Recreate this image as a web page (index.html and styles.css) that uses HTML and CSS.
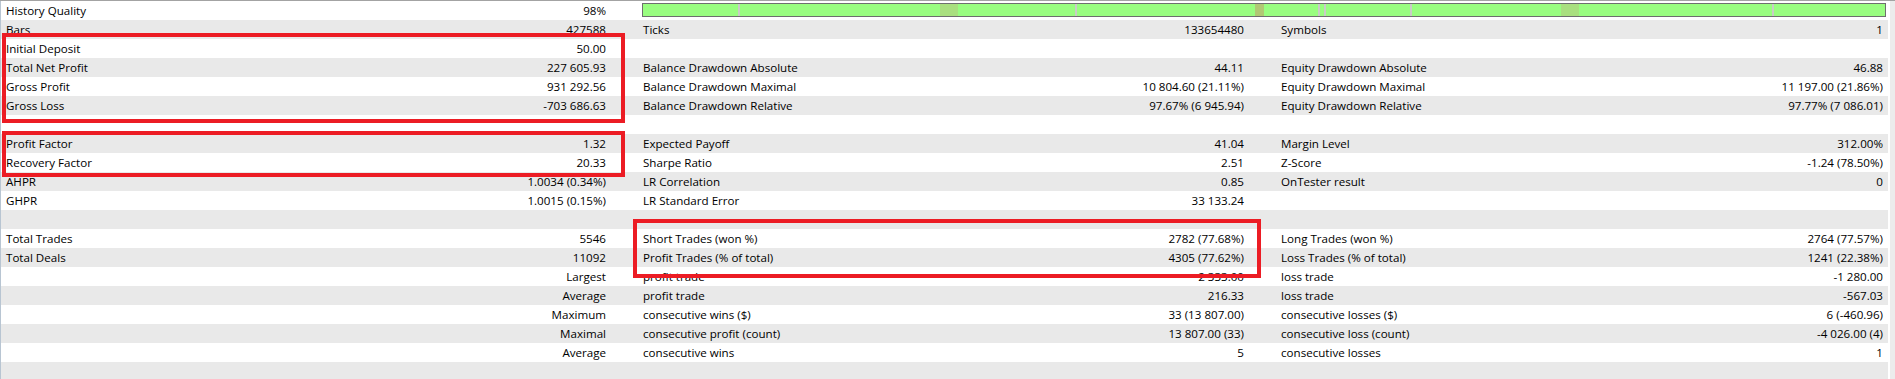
FILE: index.html
```html
<!DOCTYPE html>
<html>
<head>
<meta charset="utf-8">
<link rel="stylesheet" href="styles.css">
</head>
<body>
<div class="frame">
  <div class="report">
    <div class="row"><span class="l">History Quality</span><span class="v">98%</span>
      <div class="bar">
        <span class="seg gray" style="left:95px;width:2px"></span>
        <span class="seg lite" style="left:297px;width:18px"></span>
        <span class="seg gray" style="left:432px;width:2px"></span>
        <span class="seg olive" style="left:612px;width:9px"></span>
        <span class="seg gray" style="left:675px;width:2px"></span>
        <span class="seg gray" style="left:681px;width:2px"></span>
        <span class="seg gray" style="left:767px;width:2px"></span>
        <span class="seg lite" style="left:918px;width:18px"></span>
        <span class="seg gray" style="left:1129px;width:2px"></span>
      </div>
    </div>
    <div class="row"><span class="l">Bars</span><span class="v">427588</span><span class="l">Ticks</span><span class="v">133654480</span><span class="l">Symbols</span><span class="v v3">1</span></div>
    <div class="row"><span class="l">Initial Deposit</span><span class="v">50.00</span><span class="l"></span><span class="v"></span><span class="l"></span><span class="v v3"></span></div>
    <div class="row"><span class="l">Total Net Profit</span><span class="v">227 605.93</span><span class="l">Balance Drawdown Absolute</span><span class="v">44.11</span><span class="l">Equity Drawdown Absolute</span><span class="v v3">46.88</span></div>
    <div class="row"><span class="l">Gross Profit</span><span class="v">931 292.56</span><span class="l">Balance Drawdown Maximal</span><span class="v">10 804.60 (21.11%)</span><span class="l">Equity Drawdown Maximal</span><span class="v v3">11 197.00 (21.86%)</span></div>
    <div class="row"><span class="l">Gross Loss</span><span class="v">-703 686.63</span><span class="l">Balance Drawdown Relative</span><span class="v">97.67% (6 945.94)</span><span class="l">Equity Drawdown Relative</span><span class="v v3">97.77% (7 086.01)</span></div>
    <div class="row"></div>
    <div class="row"><span class="l">Profit Factor</span><span class="v">1.32</span><span class="l">Expected Payoff</span><span class="v">41.04</span><span class="l">Margin Level</span><span class="v v3">312.00%</span></div>
    <div class="row"><span class="l">Recovery Factor</span><span class="v">20.33</span><span class="l">Sharpe Ratio</span><span class="v">2.51</span><span class="l">Z-Score</span><span class="v v3">-1.24 (78.50%)</span></div>
    <div class="row"><span class="l">AHPR</span><span class="v">1.0034 (0.34%)</span><span class="l">LR Correlation</span><span class="v">0.85</span><span class="l">OnTester result</span><span class="v v3">0</span></div>
    <div class="row"><span class="l">GHPR</span><span class="v">1.0015 (0.15%)</span><span class="l">LR Standard Error</span><span class="v">33 133.24</span><span class="l"></span><span class="v v3"></span></div>
    <div class="row"></div>
    <div class="row"><span class="l">Total Trades</span><span class="v">5546</span><span class="l">Short Trades (won %)</span><span class="v">2782 (77.68%)</span><span class="l">Long Trades (won %)</span><span class="v v3">2764 (77.57%)</span></div>
    <div class="row"><span class="l">Total Deals</span><span class="v">11092</span><span class="l">Profit Trades (% of total)</span><span class="v">4305 (77.62%)</span><span class="l">Loss Trades (% of total)</span><span class="v v3">1241 (22.38%)</span></div>
    <div class="row"><span class="l"></span><span class="v">Largest</span><span class="l">profit trade</span><span class="v">2 333.00</span><span class="l">loss trade</span><span class="v v3">-1 280.00</span></div>
    <div class="row"><span class="l"></span><span class="v">Average</span><span class="l">profit trade</span><span class="v">216.33</span><span class="l">loss trade</span><span class="v v3">-567.03</span></div>
    <div class="row"><span class="l"></span><span class="v">Maximum</span><span class="l">consecutive wins ($)</span><span class="v">33 (13 807.00)</span><span class="l">consecutive losses ($)</span><span class="v v3">6 (-460.96)</span></div>
    <div class="row"><span class="l"></span><span class="v">Maximal</span><span class="l">consecutive profit (count)</span><span class="v">13 807.00 (33)</span><span class="l">consecutive loss (count)</span><span class="v v3">-4 026.00 (4)</span></div>
    <div class="row"><span class="l"></span><span class="v">Average</span><span class="l">consecutive wins</span><span class="v">5</span><span class="l">consecutive losses</span><span class="v v3">1</span></div>
    <div class="row"></div>
  </div>
  <div class="gap"></div>
  <div class="edge"></div>
  <div class="mark mark-a"></div>
  <div class="mark mark-b"></div>
  <div class="mark mark-c"></div>
</div>
</body>
</html>
```

FILE: styles.css
```css
html, body {
  margin: 0;
  padding: 0;
  background: #ffffff;
}

body {
  font-family: "Open Sans", "Noto Sans", sans-serif;
  font-size: 11.6px;
  color: #000000;
}

.frame {
  position: relative;
  display: flex;
  height: 378px;
  overflow: hidden;
  border-top: 1px solid #a3a3a3;
}

.report {
  width: 1887px;
  flex: none;
  border-left: 1px solid #b8c5d2;
}

.row {
  display: grid;
  grid-template-columns: 319px 318px 319px 319px 304px 308px;
  height: 19px;
  line-height: 19px;
}

.row:nth-child(even) {
  background: #e9e9e9;
}

.l {
  padding-left: 5px;
  white-space: nowrap;
  overflow: hidden;
}

.v {
  padding-right: 32px;
  text-align: right;
  white-space: nowrap;
}

.v3 {
  padding-right: 5px;
}

.bar {
  grid-column: 3 / 7;
  position: relative;
  box-sizing: border-box;
  height: 14px;
  margin: 2px 2px 0 4px;
  border: 1px solid #6e6e6e;
  background: #99fd80;
}

.seg {
  position: absolute;
  top: 0;
  bottom: 0;
}

.seg.gray {
  background: #c9cbc6;
}

.seg.lite {
  background: #a9df7f;
}

.seg.olive {
  background: #b1c874;
}

.gap {
  width: 2px;
  flex: none;
}

.edge {
  width: 5px;
  flex: none;
  background: #ececec;
}

.mark {
  position: absolute;
  box-sizing: border-box;
  border: 4px solid #ec1c24;
}

.mark-a {
  left: 2px;
  top: 32px;
  width: 623px;
  height: 90px;
}

.mark-b {
  left: 2px;
  top: 130px;
  width: 623px;
  height: 46px;
}

.mark-c {
  left: 633px;
  top: 218px;
  width: 628px;
  height: 59px;
}
```
